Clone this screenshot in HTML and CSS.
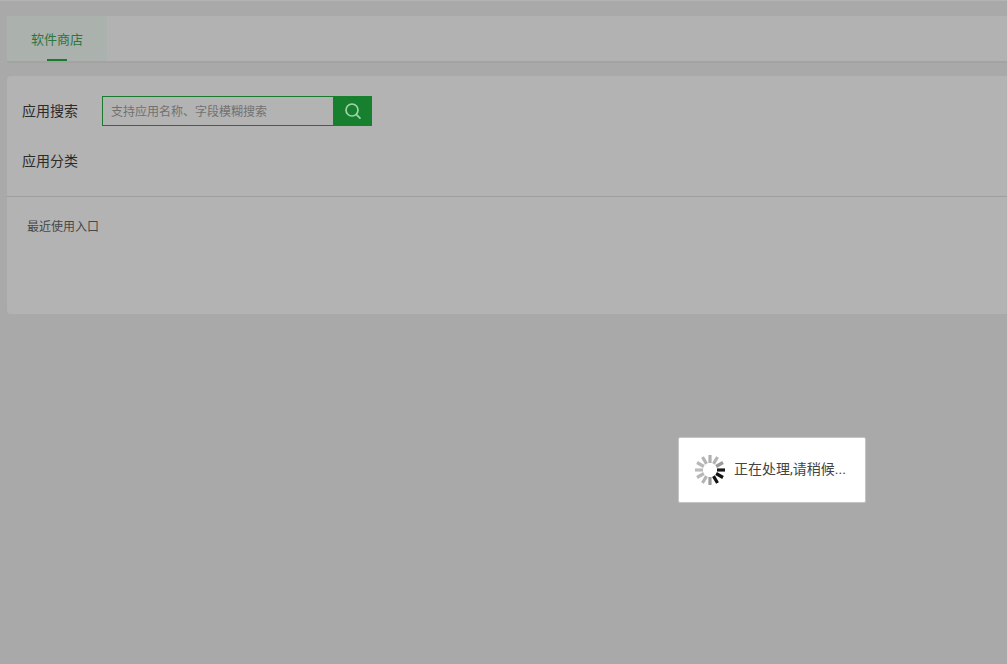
FILE: index.html
```html
<!DOCTYPE html>
<html lang="zh">
<head>
<meta charset="utf-8">
<title>软件商店</title>
<link rel="stylesheet" href="styles.css">
</head>
<body>
<div class="page">
  <nav class="tabs">
    <a class="tab">软件商店</a>
  </nav>
  <section class="panel">
    <div class="filters">
      <div class="row">
        <span class="label">应用搜索</span>
        <div class="search">
          <input class="search-input" placeholder="支持应用名称、字段模糊搜索">
          <button class="search-btn" aria-label="搜索">
            <svg width="18" height="18" viewBox="0 0 18 18" fill="none" stroke="#a3d2ae" stroke-width="1.7" stroke-linecap="round"><circle cx="8" cy="8" r="6"/><path d="M12.400 12.600 16 16.200"/></svg>
          </button>
        </div>
      </div>
      <div class="row row-cat">
        <span class="label">应用分类</span>
      </div>
    </div>
    <div class="recent">最近使用入口</div>
  </section>
</div>
<div class="loading">
  <svg class="spinner" width="32" height="32" viewBox="0 0 32 32" stroke-width="3.200" stroke-linecap="butt">
    <path d="M16 1v8" stroke="#b0b0b0"/>
    <path d="M23.500 3l-4 6.900" stroke="#b4b4b4"/>
    <path d="M29 8.500l-6.900 4" stroke="#9a9a9a"/>
    <path d="M31 16h-8" stroke="#1a1a1a"/>
    <path d="M29 23.500l-6.900-4" stroke="#111"/>
    <path d="M23.500 29l-4-6.900" stroke="#111"/>
    <path d="M16 31v-8" stroke="#9c9c9c"/>
    <path d="M8.500 29l4-6.900" stroke="#b4b4b4"/>
    <path d="M3 23.500l6.900-4" stroke="#b8b8b8"/>
    <path d="M1 16h8" stroke="#bcbcbc"/>
    <path d="M3 8.500l6.900 4" stroke="#b8b8b8"/>
    <path d="M8.500 3l4 6.900" stroke="#b4b4b4"/>
  </svg>
  <span class="loading-text">正在处理,请稍候...</span>
</div>
</body>
</html>
```

FILE: styles.css
```css
* { box-sizing: border-box; }
html, body { margin: 0; height: 100%; overflow: hidden; }
body {
  background: #a9a9a9;
  font-family: "Liberation Sans", "Noto Sans CJK SC", sans-serif;
  color: #2b2b2b;
}
.page {
  width: 1020px;
  padding: 15px 0 0 7px;
  border-top: 1px solid #b4b4b4;
}
.tabs {
  height: 47px;
  background: #b2b2b2;
  border-bottom: 2px solid #a3a3a3;
  display: flex;
}
.tab {
  width: 100px;
  height: 45px;
  background: #abb1ac;
  color: #2b7540;
  font-size: 13px;
  line-height: 48px;
  text-align: center;
  position: relative;
}
.tab::after {
  content: "";
  position: absolute;
  left: 40px;
  bottom: 0;
  width: 20px;
  height: 2px;
  background: #1a7a2e;
}
.panel {
  margin-top: 13px;
  height: 238px;
  background: #b3b3b3;
  border-radius: 4px 0 0 4px;
}
.filters {
  height: 121px;
  padding: 20px 0 0 15px;
  border-bottom: 1px solid #9f9f9f;
}
.row { display: flex; align-items: center; height: 30px; }
.row-cat { margin-top: 20px; }
.label { width: 80px; font-size: 14px; line-height: 18px; padding-bottom: 1px; color: #2b2b2b; }
.search { display: flex; width: 270px; height: 30px; }
.search-input {
  flex: 1;
  min-width: 0;
  height: 30px;
  padding: 2px 8px 0;
  border: 1px solid #1a7a2e;
  border-right: 0;
  background: transparent;
  font: 12px "Liberation Sans", "Noto Sans CJK SC", sans-serif;
  outline: none;
}
.search-input::placeholder { color: #717171; opacity: 1; }
.search-btn {
  width: 39px;
  height: 30px;
  padding: 0;
  border: 0;
  background: #17802f;
  display: flex;
  align-items: center;
  justify-content: center;
}
.recent {
  padding: 22px 0 0 20px;
  font-size: 12px;
  line-height: 16px;
  color: #484848;
}
.loading {
  position: fixed;
  left: 678px;
  top: 437px;
  width: 188px;
  height: 66px;
  background: #fff;
  border: 1px solid #c4c4c4;
  border-radius: 2px;
  display: flex;
  align-items: center;
  padding-left: 15px;
  gap: 8px;
}
.spinner { flex: none; }
.loading-text {
  font: 14px/18px Roboto, "Noto Sans CJK SC", sans-serif;
  padding-bottom: 3px;
  color: #444;
  white-space: nowrap;
}
```
